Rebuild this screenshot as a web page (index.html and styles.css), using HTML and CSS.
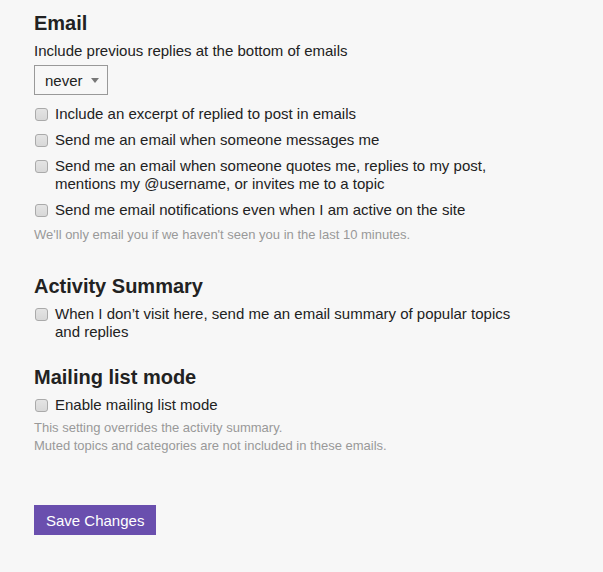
FILE: index.html
```html
<!DOCTYPE html>
<html lang="en">
<head>
    <meta charset="UTF-8">
    <title>Email preferences</title>
    <link rel="stylesheet" href="styles.css">
</head>
<body>
    <div class="prefs">
        <section class="group email">
            <h2>Email</h2>
            <div class="field-label">Include previous replies at the bottom of emails</div>
            <div class="select">
                <span>never</span>
                <span class="caret"></span>
            </div>
            <label class="check first"><input type="checkbox"><span>Include an excerpt of replied to post in emails</span></label>
            <label class="check"><input type="checkbox"><span>Send me an email when someone messages me</span></label>
            <label class="check"><input type="checkbox"><span>Send me an email when someone quotes me, replies to my post, mentions my @username, or invites me to a topic</span></label>
            <label class="check"><input type="checkbox"><span>Send me email notifications even when I am active on the site</span></label>
            <div class="hint">We'll only email you if we haven't seen you in the last 10 minutes.</div>
        </section>

        <section class="group summary">
            <h2>Activity Summary</h2>
            <label class="check near"><input type="checkbox"><span>When I don’t visit here, send me an email summary of popular topics and replies</span></label>
        </section>

        <section class="group mailing">
            <h2>Mailing list mode</h2>
            <label class="check near"><input type="checkbox"><span>Enable mailing list mode</span></label>
            <div class="hint tight">This setting overrides the activity summary.<br>Muted topics and categories are not included in these emails.</div>
        </section>

        <button class="save">Save Changes</button>
    </div>
</body>
</html>
```

FILE: styles.css
```css
body {
    margin: 0;
    background: #f7f7f7;
    font-family: "Liberation Sans", Arial, sans-serif;
    font-size: 15px;
    color: #222;
}
.prefs {
    padding: 11px 0 0 34px;
    width: 480px;
}
h2 {
    margin: 0;
    font-size: 20px;
    line-height: 24px;
    font-weight: bold;
    color: #222;
}
.group.summary {
    margin-top: 30px;
}
.group.mailing {
    margin-top: 24px;
}
.field-label {
    margin-top: 7px;
    line-height: 18px;
}
.select {
    margin-top: 5px;
    height: 28px;
    width: 62px;
    border: 1px solid #999;
    display: flex;
    align-items: center;
    gap: 8px;
    padding-left: 10px;
}
.caret {
    width: 0;
    height: 0;
    margin-top: 1px;
    border-left: 4px solid transparent;
    border-right: 4px solid transparent;
    border-top: 5px solid #777;
}
.check {
    display: flex;
    align-items: flex-start;
    gap: 7px;
    line-height: 18px;
    margin-top: 8px;
}
.check.first {
    margin-top: 10px;
}
.check.near {
    margin-top: 7px;
}
.check input {
    appearance: none;
    margin: 3px 0 0 1px;
    width: 13px;
    height: 13px;
    flex: none;
    border: 1px solid #aaa;
    border-radius: 3px;
    background: linear-gradient(#e4e4e4, #d8d8d8);
}
.hint {
    margin-top: 7px;
    font-size: 13px;
    line-height: 18px;
    color: #999;
}
.hint.tight {
    margin-top: 5px;
}
.save {
    margin-top: 50px;
    height: 30px;
    padding: 0 12px;
    border: none;
    background: #6a4fae;
    color: #fff;
    font-family: "Liberation Sans", Arial, sans-serif;
    font-size: 15px;
}
```
